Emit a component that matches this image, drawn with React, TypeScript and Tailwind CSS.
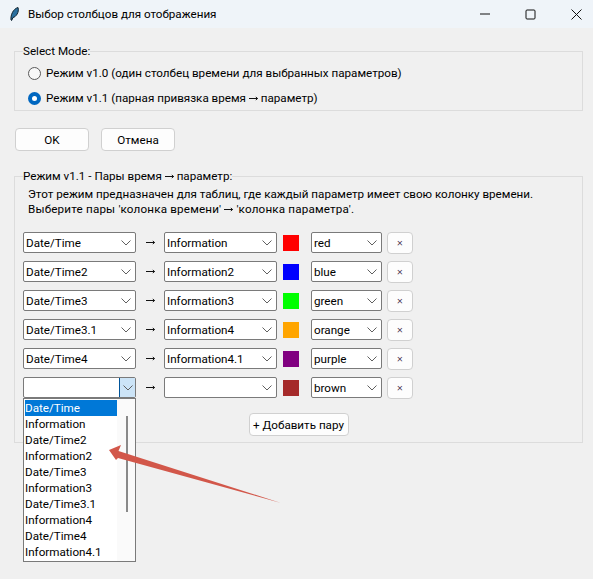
import React from "react";

const rows = [
  { time: "Date/Time", param: "Information", swatch: "bg-[#ff0000]", color: "red" },
  { time: "Date/Time2", param: "Information2", swatch: "bg-[#0000ff]", color: "blue" },
  { time: "Date/Time3", param: "Information3", swatch: "bg-[#00ff00]", color: "green" },
  { time: "Date/Time3.1", param: "Information4", swatch: "bg-[#ffa500]", color: "orange" },
  { time: "Date/Time4", param: "Information4.1", swatch: "bg-[#800080]", color: "purple" },
  { time: "", param: "", swatch: "bg-[#a52a2a]", color: "brown" },
];

const options = [
  "Date/Time",
  "Information",
  "Date/Time2",
  "Information2",
  "Date/Time3",
  "Information3",
  "Date/Time3.1",
  "Information4",
  "Date/Time4",
  "Information4.1",
];

const Chevron = () => (
  <svg width="10" height="6" viewBox="0 0 10 6" fill="none" stroke="#606060" strokeWidth="1">
    <path d="M0.5 0.5 L5 5 L9.5 0.5" />
  </svg>
);

const Arrow = () => (
  <svg width="9" height="5" viewBox="0 0 9 5" className="inline-block align-[1px]">
    <path d="M0 2.5 H8.5 M6.8 1 L8.6 2.5 L6.8 4" fill="none" stroke="#111" strokeWidth="1" />
  </svg>
);

const Combo = ({ value, width, open }: { value: string; width: string; open?: boolean }) => (
  <div className={`flex h-[21px] items-center justify-between rounded-[2px] border border-[#7a7a7a] bg-white ${width}`}>
    <span className="pl-[2px] whitespace-nowrap">{value}</span>
    {open ? (
      <span className="flex h-full w-4 items-center justify-center border-l border-[#005499] bg-[#cce4f7]">
        <Chevron />
      </span>
    ) : (
      <span className="pr-[4px]">
        <Chevron />
      </span>
    )}
  </div>
);

const Btn = ({ children, className }: { children: React.ReactNode; className: string }) => (
  <button className={`flex items-center justify-center rounded-[4px] border border-[#d0d0d0] bg-[#fdfdfd] ${className}`}>
    {children}
  </button>
);

export default function App() {
  return (
    <div
      className="relative h-[579px] w-[593px] overflow-hidden bg-[#f0f0f0] text-[11.65px] leading-4 text-black"
      style={{ fontFamily: 'Roboto, "Noto Sans", sans-serif' }}
    >
      {/* title bar */}
      <div className="flex h-[28px] items-center bg-[#eff4f9]">
        <svg className="ml-[10px] mr-[9px]" width="9" height="14" viewBox="0 0 9 14">
          <path d="M1 13 C0.5 8 3 2 8 0.5 C9.5 5 6 10 3 10.5 L1.6 13.5 Z" fill="#2a6f9e" stroke="#10222e" strokeWidth="1" />
        </svg>
        <span>Выбор столбцов для отображения</span>
        <div className="ml-auto flex items-center">
          <svg width="11" height="2" viewBox="0 0 11 2" className="mr-[34px]">
            <path d="M0 1 H10" stroke="#111" strokeWidth="1" />
          </svg>
          <svg width="11" height="11" viewBox="0 0 11 11" className="mr-[35px]">
            <rect x="1" y="1" width="9" height="9" rx="1" fill="none" stroke="#111" strokeWidth="1" />
          </svg>
          <svg width="11" height="11" viewBox="0 0 11 11" className="mr-[11px]">
            <path d="M0.5 0.5 L10.5 10.5 M10.5 0.5 L0.5 10.5" stroke="#111" strokeWidth="1" />
          </svg>
        </div>
      </div>

      {/* mode group */}
      <fieldset className="mx-[14px] mt-[15px] h-[68px] w-[569px] border border-[#dcdcdc] pl-[8px] pr-0">
        <legend className="leading-4">Select Mode:</legend>
        <div className="mt-[6px] flex h-4 items-center gap-[5px] pl-[5px]">
          <span className="h-[13px] w-[13px] rounded-full border border-[#5a5a5a] bg-[#f8f8f8]" />
          <span>Режим v1.0 (один столбец времени для выбранных параметров)</span>
        </div>
        <div className="mt-[9px] flex h-4 items-center gap-[5px] pl-[5px]">
          <span className="flex h-[13px] w-[13px] items-center justify-center rounded-full bg-[#0067c0]">
            <span className="h-[5px] w-[5px] rounded-full bg-white" />
          </span>
          <span>
            Режим v1.1 (парная привязка время <Arrow /> параметр)
          </span>
        </div>
      </fieldset>

      {/* ok / cancel */}
      <div className="ml-[15px] mt-[17px] flex gap-[12px]">
        <Btn className="h-[23px] w-[74px]">OK</Btn>
        <Btn className="h-[23px] w-[74px]">Отмена</Btn>
      </div>

      {/* pairs group */}
      <fieldset className="mx-[14px] mt-[17px] h-[275px] w-[569px] border border-[#dcdcdc] pl-[8px]">
        <legend className="leading-4">
          Режим v1.1 - Пары время <Arrow /> параметр:
        </legend>
        <div className="ml-[5px] mt-[3px] leading-[15px]">
          <div>Этот режим предназначен для таблиц, где каждый параметр имеет свою колонку времени.</div>
          <div className="tracking-[0.18px]">
            Выберите пары 'колонка времени' <Arrow /> 'колонка параметра'.
          </div>
        </div>
        <div className="mt-[15px] flex flex-col gap-[8px]">
          {rows.map((row, i) => (
            <div key={i} className="flex h-[21px] items-center">
              <Combo value={row.time} width="w-[113px]" open={i === 5} />
              <span className="flex w-[28px] justify-center">
                <Arrow />
              </span>
              <Combo value={row.param} width="w-[113px]" />
              <span className={`ml-[6px] h-4 w-4 ${row.swatch}`} />
              <span className="ml-[12px]">
                <Combo value={row.color} width="w-[71px]" />
              </span>
              <Btn className="ml-[5px] h-[22px] w-[26px] text-[11px] font-light text-[#3a1a3a]">×</Btn>
            </div>
          ))}
        </div>
        <div className="mt-[15px] flex justify-center pr-[8px]">
          <Btn className="h-[23px] w-[100px]">+ Добавить пару</Btn>
        </div>
      </fieldset>

      {/* open dropdown */}
      <div className="absolute left-[23px] top-[398px] flex h-[164px] w-[113px] border border-[#7a7a7a] bg-white">
        <div className="w-[93px] pl-[1px] pt-[1px]">
          {options.map((o, i) => (
            <div
              key={o}
              className={`h-4 whitespace-nowrap leading-4 ${i === 0 ? "bg-[#0078d7] text-white" : "text-black"}`}
            >
              {o}
            </div>
          ))}
        </div>
        <div className="relative flex-1 bg-[#fafafa]">
          <div className="absolute left-[9px] top-[17px] h-[96px] w-[2px] bg-[#8a8a8a]" />
        </div>
      </div>

      {/* annotation arrow */}
      <svg className="absolute left-0 top-0" width="593" height="579" viewBox="0 0 593 579">
        <path d="M109 450 L121 445 L118.5 451 L281 503 L118 458 L116 460 Z" fill="#d2574a" />
      </svg>
    </div>
  );
}
